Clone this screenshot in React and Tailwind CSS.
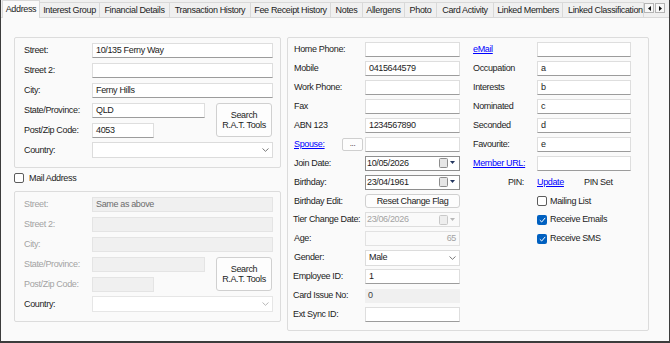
import React from "react";

const TextBox = ({ className = "", value = "", disabled = false, right = false, textClass = "" }) => (
  <div
    className={`h-[15px] flex items-center px-[3px] whitespace-nowrap overflow-hidden ${
      disabled ? "bg-[#f0f0f0] border border-[#e4e4e4]" : "bg-white border border-[#dedede] border-b-[#9c9c9c]"
    } ${right ? "justify-end" : ""} ${className}`}
  >
    <span className={textClass}>{value}</span>
  </div>
);

const Chevron = ({ color = "#6a6a6a" }) => (
  <svg width="7" height="4" viewBox="0 0 7 4" className="ml-auto mr-[3px]">
    <path d="M0.5 0.5 L3.5 3.3 L6.5 0.5" fill="none" stroke={color} strokeWidth="0.9" />
  </svg>
);

const Select = ({ className = "", value = "", light = false }) => (
  <div
    className={`h-[16px] flex items-center pl-[3px] bg-white border ${
      light ? "border-[#e6e6e6]" : "border-[#dcdcdc]"
    } ${className}`}
  >
    <span>{value}</span>
    <Chevron color={light ? "#b0b0b0" : "#6a6a6a"} />
  </div>
);

const CalIcon = ({ disabled = false }) => (
  <svg width="17" height="10" viewBox="0 0 17 10" className="ml-auto mr-[3px]">
    <rect x="0.5" y="0.5" width="8" height="9" rx="1" fill={disabled ? "#eeeeee" : "#e6e6e6"} stroke={disabled ? "#c8c8c8" : "#8c8c8c"} />
    <path d="M11 3 L16 3 L13.5 6 Z" fill={disabled ? "#b8b8b8" : "#23365f"} />
  </svg>
);

const DateBox = ({ value, disabled = false }) => (
  <div
    className={`h-[15px] w-[95px] flex items-center pl-[1px] border ${
      disabled ? "bg-[#fafafa] border-[#dedede] text-[#a3a3a3]" : "bg-white border-[#8e8e8e]"
    }`}
  >
    <span>{value}</span>
    <CalIcon disabled={disabled} />
  </div>
);

const Btn = ({ className = "", children }) => (
  <div
    className={`flex flex-col items-center justify-center bg-[#fdfdfd] border border-[#d0d0d0] rounded-[3px] leading-[10px] text-center ${className}`}
  >
    {children}
  </div>
);

const CheckBox = ({ checked = false }) => (
  checked ? (
    <div className="w-[10px] h-[10px] rounded-[2px] bg-[#0060c0] flex items-center justify-center shrink-0">
      <svg width="7" height="6" viewBox="0 0 7 6">
        <path d="M0.8 3.2 L2.7 5 L6.2 0.9" fill="none" stroke="white" strokeWidth="1" />
      </svg>
    </div>
  ) : (
    <div className="w-[10px] h-[10px] rounded-[2px] bg-white border border-[#5c5c5c] shrink-0" />
  )
);

const LRow = ({ label, children, disabled = false }) => (
  <div className="h-[20px] flex items-center">
    <div className={`w-[68px] shrink-0 whitespace-nowrap ${disabled ? "text-[#a3a3a3]" : ""}`}>{label}</div>
    {children}
  </div>
);

const MRow = ({ label, children, link = false, labelClass = "" }) => (
  <div className="h-[18.9px] flex items-center">
    <div className={`w-[71px] shrink-0 whitespace-nowrap ${link ? "text-[#0000ff] underline" : ""} ${labelClass}`}>{label}</div>
    {children}
  </div>
);

const RRow = ({ label, children, link = false }) => (
  <div className="h-[18.9px] flex items-center">
    <div className={`w-[64px] shrink-0 whitespace-nowrap ${link ? "text-[#0000ff] underline" : ""}`}>{label}</div>
    {children}
  </div>
);

const Tab = ({ children, className = "" }) => (
  <div
    className={`h-[15px] bg-[#f0f0f0] border-t border-r border-[#d9d9d9] flex items-center justify-center whitespace-nowrap shrink-0 ${className}`}
  >
    {children}
  </div>
);

export default function App() {
  return (
    <div className="w-[670px] h-[343px] bg-[#f0f0f0] border-l border-r border-b-2 border-[#3c3c3c] flex flex-col overflow-hidden font-['Liberation_Sans',Arial,sans-serif] text-[9px] tracking-[-0.35px] leading-none text-[#1c1c1c]">
      {/* Tab strip */}
      <div className="h-[17px] flex items-end pl-[1px] shrink-0">
        <div className="relative z-10 mb-[-1px] h-[18px] w-[38px] bg-[#fafafa] border-t border-l border-r border-[#d9d9d9] flex justify-center pt-[4px] shrink-0">
          Address
        </div>
        <Tab className="w-[60px]">Interest Group</Tab>
        <Tab className="w-[70px]">Financial Details</Tab>
        <Tab className="w-[81px]">Transaction History</Tab>
        <Tab className="w-[80px]">Fee Receipt History</Tab>
        <Tab className="w-[32px]">Notes</Tab>
        <Tab className="w-[42px]">Allergens</Tab>
        <Tab className="w-[32px]">Photo</Tab>
        <Tab className="w-[57px]">Card Activity</Tab>
        <Tab className="w-[69px]">Linked Members</Tab>
        <Tab className="w-[81px] !justify-start pl-[5px] overflow-hidden">Linked Classifications</Tab>
        <div className="self-start mt-[3px] flex gap-[1px] shrink-0">
          <div className="w-[10px] h-[10px] bg-[#f7f7f7] border border-[#b4b4b4] flex items-center justify-center">
            <svg width="3" height="5" viewBox="0 0 3 5"><path d="M3 0 L0 2.5 L3 5 Z" fill="#111" /></svg>
          </div>
          <div className="w-[10px] h-[10px] bg-[#f7f7f7] border border-[#b4b4b4] flex items-center justify-center">
            <svg width="3" height="5" viewBox="0 0 3 5"><path d="M0 0 L3 2.5 L0 5 Z" fill="#111" /></svg>
          </div>
        </div>
      </div>

      {/* Page body */}
      <div className="flex-1 bg-[#fafafa] border-t border-[#d9d9d9] flex pl-[13px] pt-[19px]">
        {/* Left column */}
        <div className="w-[267px] flex flex-col shrink-0">
          <div className="h-[131px] border border-[#dcdcdc] rounded-[2px] pl-[9px] pr-[7px] pt-[2px] flex flex-col">
            <LRow label="Street:"><TextBox className="w-[181px]" value="10/135 Ferny Way" /></LRow>
            <LRow label="Street 2:"><TextBox className="w-[181px]" /></LRow>
            <LRow label="City:"><TextBox className="w-[181px]" value="Ferny Hills" /></LRow>
            <div className="flex items-center">
              <div className="flex flex-col">
                <LRow label="State/Province:"><TextBox className="w-[113px]" value="QLD" /></LRow>
                <LRow label="Post/Zip Code:"><TextBox className="w-[62px]" value="4053" /></LRow>
              </div>
              <Btn className="ml-[11px] w-[56px] h-[34px]">
                <span>Search</span>
                <span>R.A.T. Tools</span>
              </Btn>
            </div>
            <LRow label="Country:"><Select className="w-[181px]" /></LRow>
          </div>

          <div className="mt-[5px] h-[10px] flex items-center gap-[5px]">
            <CheckBox />
            <span>Mail Address</span>
          </div>

          <div className="mt-[8px] h-[131px] border border-[#dcdcdc] rounded-[2px] pl-[9px] pr-[7px] pt-[2px] flex flex-col">
            <LRow label="Street:" disabled><TextBox className="w-[181px]" value="Same as above" disabled textClass="text-[#6b6b6b]" /></LRow>
            <LRow label="Street 2:" disabled><TextBox className="w-[181px]" disabled /></LRow>
            <LRow label="City:" disabled><TextBox className="w-[181px]" disabled /></LRow>
            <div className="flex items-center">
              <div className="flex flex-col">
                <LRow label="State/Province:" disabled><TextBox className="w-[113px]" disabled /></LRow>
                <LRow label="Post/Zip Code:" disabled><TextBox className="w-[62px]" disabled /></LRow>
              </div>
              <Btn className="ml-[11px] w-[56px] h-[34px]">
                <span>Search</span>
                <span>R.A.T. Tools</span>
              </Btn>
            </div>
            <LRow label="Country:"><Select className="w-[181px]" light /></LRow>
          </div>
        </div>

        {/* Middle + right group */}
        <div className="ml-[6px] w-[362px] h-[294px] border border-[#dcdcdc] rounded-[2px] pl-[6px] pt-[2.5px] flex shrink-0">
          <div className="w-[166px] flex flex-col">
            <MRow label="Home Phone:"><TextBox className="w-[95px]" /></MRow>
            <MRow label="Mobile"><TextBox className="w-[95px]" value="0415644579" /></MRow>
            <MRow label="Work Phone:"><TextBox className="w-[95px]" /></MRow>
            <MRow label="Fax"><TextBox className="w-[95px]" /></MRow>
            <MRow label="ABN 123"><TextBox className="w-[95px]" value="1234567890" /></MRow>
            <div className="h-[18.9px] flex items-center">
              <div className="w-[48px] shrink-0 text-[#0000ff] underline">Spouse:</div>
              <div className="w-[21px] h-[13px] bg-[#fdfdfd] border border-[#cfcfcf] rounded-[2px] flex items-center justify-center text-[8px]">...</div>
              <TextBox className="ml-[2px] w-[95px]" />
            </div>
            <MRow label="Join Date:"><DateBox value="10/05/2026" /></MRow>
            <MRow label="Birthday:"><DateBox value="23/04/1961" /></MRow>
            <MRow label="Birthday Edit:">
              <Btn className="w-[95px] h-[14px]">Reset Change Flag</Btn>
            </MRow>
            <MRow label="Tier Change Date:" labelClass="-ml-[1px] w-[72px]"><DateBox value="23/06/2026" disabled /></MRow>
            <MRow label="Age:">
              <TextBox className="w-[95px] !bg-[#fafafa] !border-[#e2e2e2]" value="65" right textClass="text-[#a3a3a3]" />
            </MRow>
            <MRow label="Gender:"><Select className="w-[95px] h-[15px]" value="Male" /></MRow>
            <MRow label="Employee ID:" labelClass="-ml-[1px] w-[72px]"><TextBox className="w-[95px]" value="1" /></MRow>
            <MRow label="Card Issue No:" labelClass="-ml-[1px] w-[72px]">
              <div className="w-[95px] h-[14px] bg-[#f0f0f0] flex items-center pl-[3px] text-[#404040]">0</div>
            </MRow>
            <MRow label="Ext Sync ID:" labelClass="-ml-[1px] w-[72px]"><TextBox className="w-[95px]" /></MRow>
          </div>

          <div className="ml-[13px] flex flex-col">
            <RRow label="eMail" link><TextBox className="w-[94px]" /></RRow>
            <RRow label="Occupation"><TextBox className="w-[94px]" value="a" /></RRow>
            <RRow label="Interests"><TextBox className="w-[94px]" value="b" /></RRow>
            <RRow label="Nominated"><TextBox className="w-[94px]" value="c" /></RRow>
            <RRow label="Seconded"><TextBox className="w-[94px]" value="d" /></RRow>
            <RRow label="Favourite:"><TextBox className="w-[94px]" value="e" /></RRow>
            <RRow label="Member URL:" link><TextBox className="w-[94px]" /></RRow>
            <div className="h-[18.9px] flex items-center">
              <div className="w-[64px] shrink-0 flex justify-end pr-[13px]">PIN:</div>
              <span className="w-[47px] text-[#0000ff] underline">Update</span>
              <span>PIN Set</span>
            </div>
            <div className="h-[18.9px] flex items-center pl-[64px] gap-[3px]">
              <CheckBox />
              <span>Mailing List</span>
            </div>
            <div className="h-[18.9px] flex items-center pl-[64px] gap-[3px]">
              <CheckBox checked />
              <span>Receive Emails</span>
            </div>
            <div className="h-[18.9px] flex items-center pl-[64px] gap-[3px]">
              <CheckBox checked />
              <span>Receive SMS</span>
            </div>
          </div>
        </div>
      </div>
    </div>
  );
}
